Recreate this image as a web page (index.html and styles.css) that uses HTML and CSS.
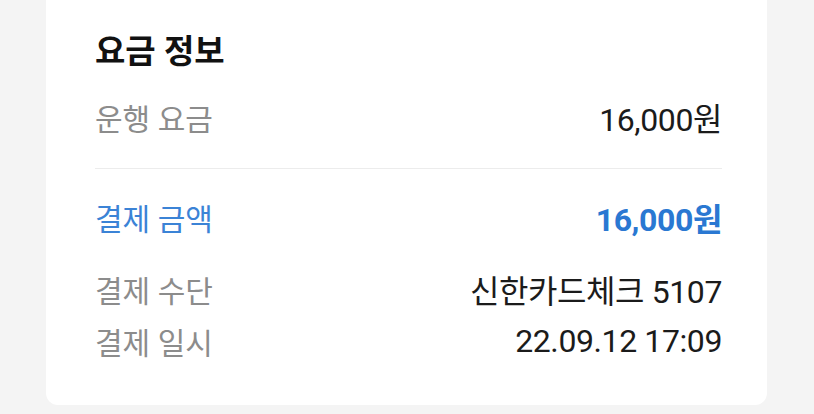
FILE: index.html
```html
<!DOCTYPE html>
<html lang="ko">
<head>
<meta charset="utf-8">
<link rel="stylesheet" href="styles.css">
</head>
<body>
<div class="card">
  <h2 class="title">요금 정보</h2>
  <div class="row first">
    <span class="label">운행 요금</span>
    <span class="value">16,000원</span>
  </div>
  <hr class="divider">
  <div class="row total">
    <span class="label">결제 금액</span>
    <span class="value">16,000원</span>
  </div>
  <div class="row method">
    <span class="label">결제 수단</span>
    <span class="value">신한카드체크 5107</span>
  </div>
  <div class="row date">
    <span class="label">결제 일시</span>
    <span class="value">22.09.12 17:09</span>
  </div>
</div>
</body>
</html>
```
FILE: styles.css
```css
html, body {
  margin: 0;
  padding: 0;
  background: #f4f4f4;
  height: 414px;
  overflow: hidden;
}
body {
  font-family: Roboto, "Noto Sans CJK KR", sans-serif;
  padding: 0 47px 0 46px;
}
.card {
  background: #ffffff;
  border-radius: 0 0 12px 12px;
  padding: 32px 45px 44px 49px;
  height: 405px;
  box-sizing: border-box;
}
.title {
  margin: 0;
  font-size: 33px;
  line-height: 40px;
  font-weight: 700;
  color: #111111;
}
.row {
  display: flex;
  justify-content: space-between;
  align-items: center;
  height: 40px;
  font-size: 30px;
}
.label {
  color: #8c8c8c;
}
.value {
  color: #1b1b1b;
  font-size: 32px;
  letter-spacing: -0.4px;
}
.row.first {
  margin-top: 25px;
}
.divider {
  border: 0;
  height: 1px;
  background: #ececec;
  margin: 31px 0 0 0;
}
.row.total {
  margin-top: 28px;
}
.row.total .label {
  color: #3b83d6;
}
.row.total .value {
  color: #2a78d2;
  font-weight: 700;
}
.row.method {
  margin-top: 32px;
}
.row.date {
  margin-top: 12px;
}
```
